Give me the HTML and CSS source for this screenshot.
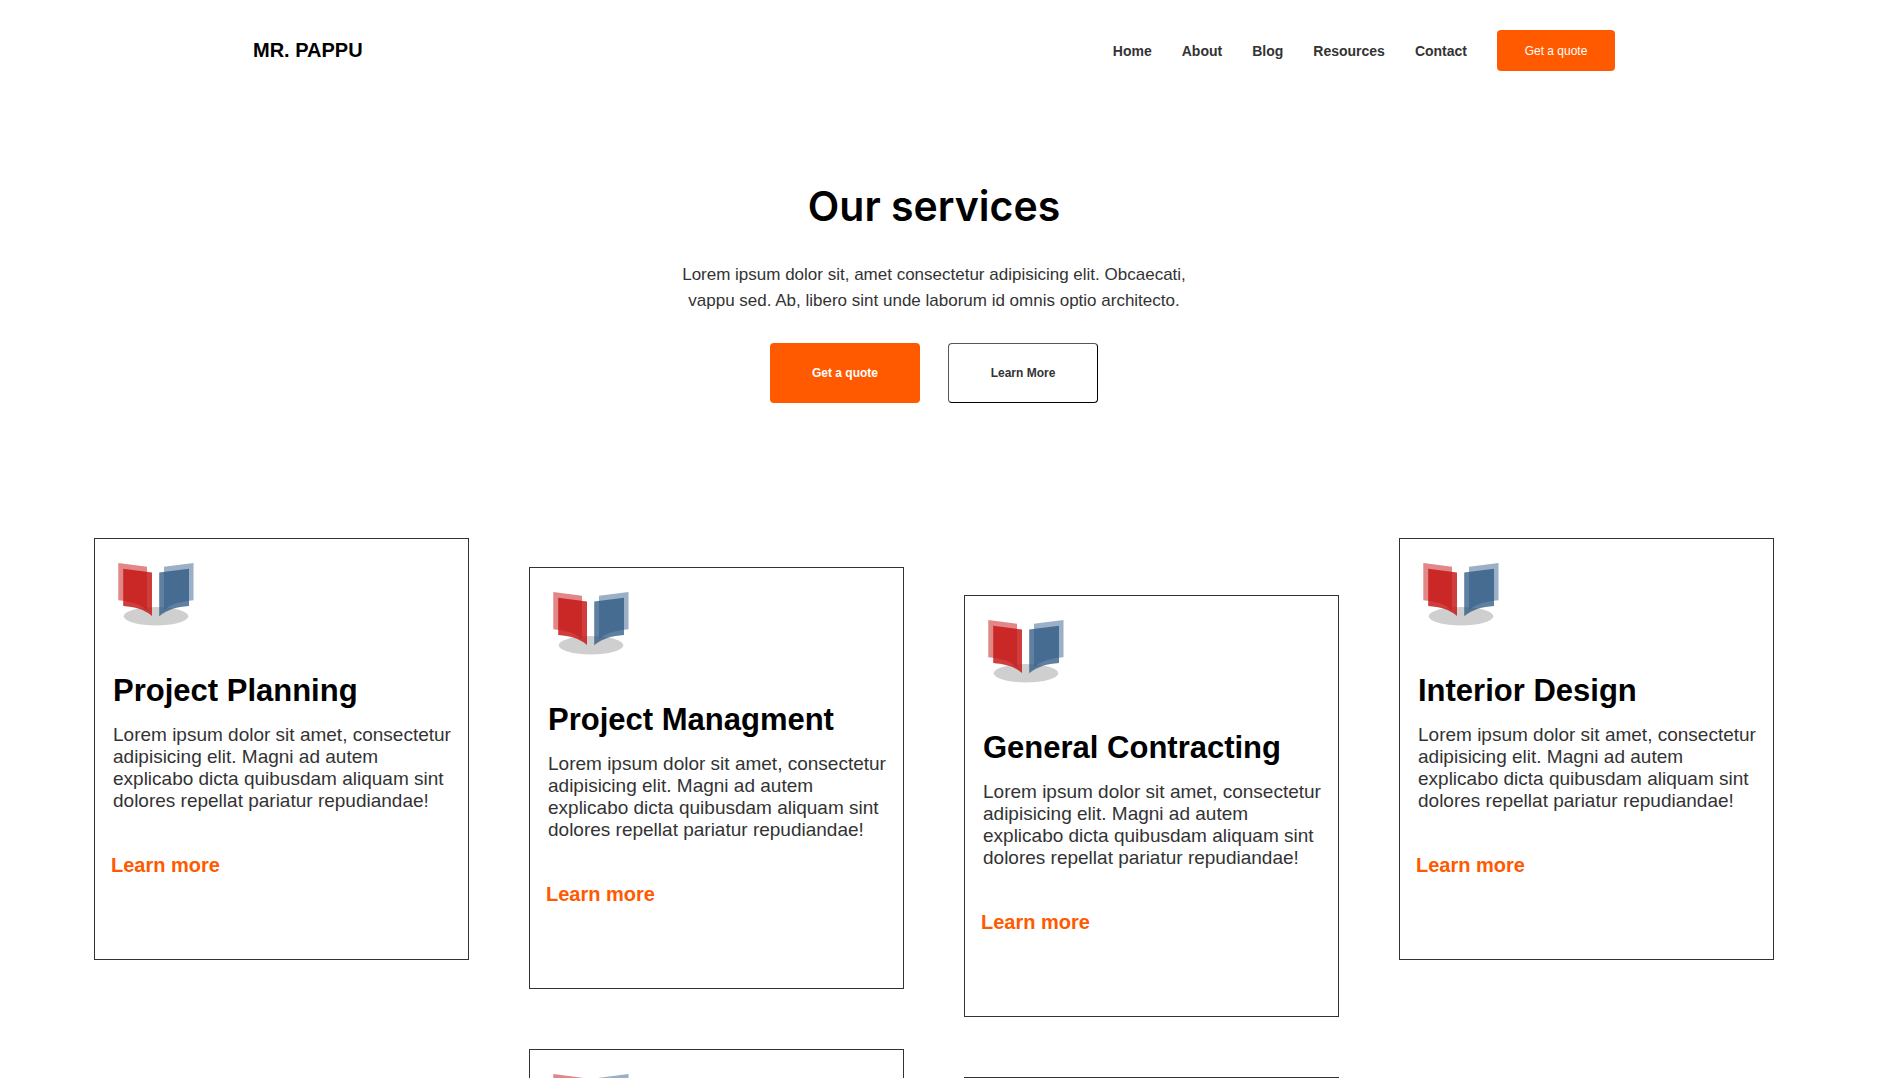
FILE: index.html
```html
<!DOCTYPE html>
<html lang="en">
<head>
<meta charset="utf-8">
<meta name="viewport" content="width=device-width, initial-scale=1">
<title>Our services</title>
<link rel="stylesheet" href="styles.css">
</head>
<body>
<svg class="sprite" aria-hidden="true">
  <symbol id="book" viewBox="0 0 76 63">
    <ellipse cx="38" cy="53.3" rx="32.3" ry="9.2" fill="#000" fill-opacity=".19"/>
    <path d="M.3 0 29 3.8V47C21 40.500 12 38.500.3 37.300Z" fill="#c50f0f" fill-opacity=".5"/>
    <path d="M5.200 5.700 34 9.500V53C26 46 17 44.200 5.200 43Z" fill="#c51212" fill-opacity=".82"/>
    <path d="M75.500 0 46 3.800V47C54 40.500 64 38.500 75.500 37.300Z" fill="#37618f" fill-opacity=".5"/>
    <path d="M71 5.700 41.200 9.500V53.300C50 46 59 44.200 71 43Z" fill="#295680" fill-opacity=".75"/>
  </symbol>
</svg>

<header class="header">
  <a class="logo" href="#">MR. PAPPU</a>
  <nav class="nav">
    <a href="#">Home</a>
    <a href="#">About</a>
    <a href="#">Blog</a>
    <a href="#">Resources</a>
    <a href="#">Contact</a>
    <button class="btn btn-small" type="button">Get a quote</button>
  </nav>
</header>

<main>
  <section class="hero">
    <h1>Our services</h1>
    <p>Lorem ipsum dolor sit, amet consectetur adipisicing elit. Obcaecati, vappu sed. Ab, libero sint unde laborum id omnis optio architecto.</p>
    <div class="actions">
      <button class="btn btn-large" type="button">Get a quote</button>
      <button class="btn btn-large btn-outline" type="button">Learn More</button>
    </div>
  </section>

  <section class="services">
    <div class="column">
      <article class="card">
        <svg class="icon" aria-hidden="true"><use href="#book"/></svg>
        <h2>Project Planning</h2>
        <p>Lorem ipsum dolor sit amet, consectetur adipisicing elit. Magni ad autem explicabo dicta quibusdam aliquam sint dolores repellat pariatur repudiandae!</p>
        <a href="#">Learn more</a>
      </article>
    </div>
    <div class="column column-lower">
      <article class="card">
        <svg class="icon" aria-hidden="true"><use href="#book"/></svg>
        <h2>Project Managment</h2>
        <p>Lorem ipsum dolor sit amet, consectetur adipisicing elit. Magni ad autem explicabo dicta quibusdam aliquam sint dolores repellat pariatur repudiandae!</p>
        <a href="#">Learn more</a>
      </article>
      <article class="card">
        <svg class="icon" aria-hidden="true"><use href="#book"/></svg>
      </article>
    </div>
    <div class="column column-lowest">
      <article class="card">
        <svg class="icon" aria-hidden="true"><use href="#book"/></svg>
        <h2>General Contracting</h2>
        <p>Lorem ipsum dolor sit amet, consectetur adipisicing elit. Magni ad autem explicabo dicta quibusdam aliquam sint dolores repellat pariatur repudiandae!</p>
        <a href="#">Learn more</a>
      </article>
      <article class="card">
        <svg class="icon" aria-hidden="true"><use href="#book"/></svg>
      </article>
    </div>
    <div class="column">
      <article class="card">
        <svg class="icon" aria-hidden="true"><use href="#book"/></svg>
        <h2>Interior Design</h2>
        <p>Lorem ipsum dolor sit amet, consectetur adipisicing elit. Magni ad autem explicabo dicta quibusdam aliquam sint dolores repellat pariatur repudiandae!</p>
        <a href="#">Learn more</a>
      </article>
    </div>
  </section>
</main>
</body>
</html>
```
FILE: styles.css
```css
* {
  box-sizing: border-box;
  margin: 0;
}

body {
  padding-right: 12px;
  background: #fff;
  color: #333;
  font-family: "Liberation Sans", Arial, sans-serif;
}

a {
  text-decoration: none;
}

.sprite {
  display: none;
}

.header {
  display: flex;
  align-items: center;
  justify-content: space-between;
  max-width: 1362px;
  margin: 0 auto;
  padding: 30px 0;
}

.logo {
  color: #000;
  font-size: 20px;
  font-weight: 700;
}

.nav {
  display: flex;
  align-items: center;
  gap: 30px;
}

.nav a {
  color: #333;
  font-size: 14px;
  font-weight: 700;
}

.btn {
  border: 0;
  border-radius: 4px;
  background: #ff5a00;
  color: #fff;
  font-family: inherit;
  font-size: 12px;
}

.btn-small {
  width: 118px;
  height: 41px;
}

.btn-large {
  width: 150px;
  height: 60px;
  font-weight: 700;
}

.btn-outline {
  border: 1px solid #000;
  border-top-color: #555;
  border-left-color: #555;
  background: #fff;
  color: #333;
}

.hero {
  display: flex;
  flex-direction: column;
  align-items: center;
  padding: 81px 20px 135px;
  text-align: center;
}

.hero h1 {
  color: #000;
  font-family: Inter, sans-serif;
  font-size: 41px;
  font-weight: 600;
  line-height: 48px;
}

.hero p {
  max-width: 520px;
  margin: 32px 0 29px;
  font-size: 17px;
  line-height: 26px;
}

.actions {
  display: flex;
  gap: 28px;
}

.services {
  display: grid;
  grid-template-columns: repeat(4, 1fr);
  gap: 60px;
  width: 90%;
  max-width: 1680px;
  margin: 0 auto;
  padding-bottom: 60px;
}

.column {
  display: flex;
  flex-direction: column;
  gap: 60px;
}

.column-lower {
  padding-top: 29px;
}

.column-lowest {
  padding-top: 57px;
}

.card {
  min-height: 422px;
  padding: 24px 16px;
  border: 1px solid #333;
}

.icon {
  display: block;
  width: 76px;
  height: 63px;
  margin-left: 7px;
}

.card h2 {
  margin: 47px 0 15px;
  padding-left: 2px;
  color: #000;
  font-size: 31px;
  line-height: 36px;
}

.card p {
  margin-bottom: 41px;
  padding-left: 2px;
  font-size: 19px;
  line-height: 22px;
}

.card a {
  display: inline-block;
  color: #ff5a00;
  font-size: 20px;
  font-weight: 700;
  line-height: 24px;
}
```
